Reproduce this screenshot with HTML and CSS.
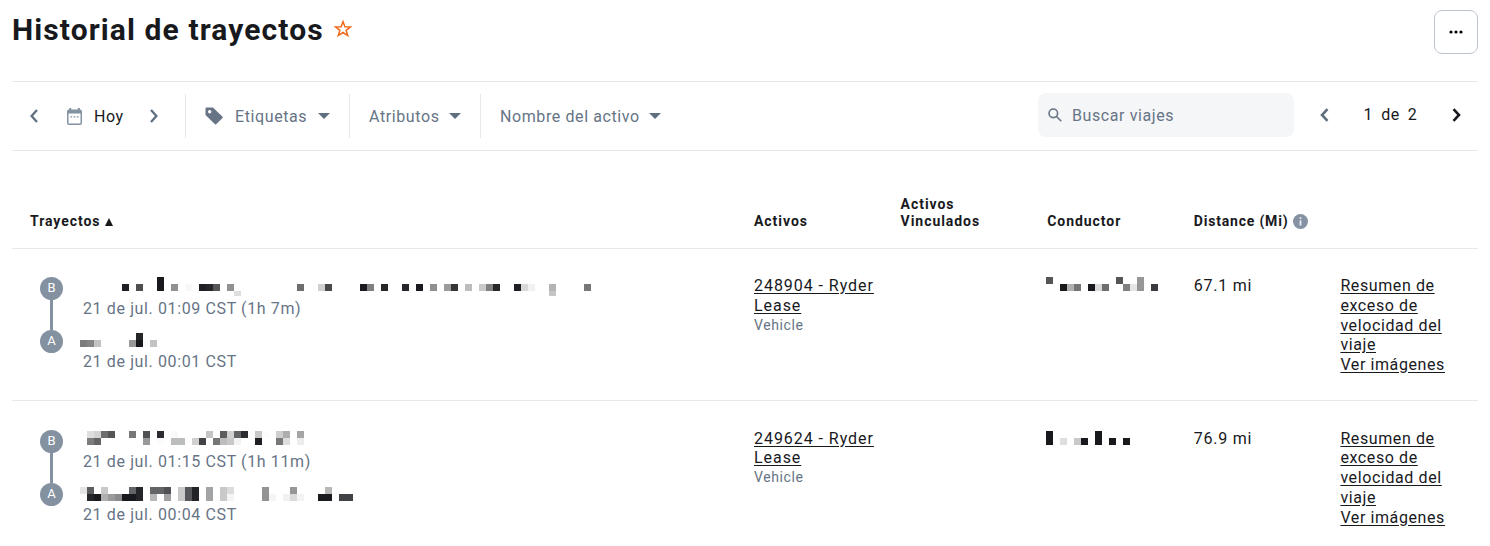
FILE: index.html
```html
<!DOCTYPE html>
<html lang="es">
<head>
    <meta charset="UTF-8">
    <meta name="viewport" content="width=device-width, initial-scale=1.0">
    <title>Historial de trayectos</title>
    <link rel="stylesheet" href="styles.css">
</head>
<body>
    <div class="page">
        <header class="header">
            <h1>Historial de trayectos</h1>
            <svg class="star" width="20" height="20" viewBox="0 0 20 20"><path d="M10 2.6l1.9 5.1 5.6.2-4.4 3.4 1.6 5.3-4.7-3.1-4.7 3.1 1.6-5.3-4.4-3.4 5.6-.2z"/></svg>
            <button class="more-button" type="button" aria-label="Más">
                <svg width="14" height="4" viewBox="0 0 14 4"><circle cx="2" cy="2" r="1.6"/><circle cx="7" cy="2" r="1.6"/><circle cx="12" cy="2" r="1.6"/></svg>
            </button>
        </header>

        <div class="toolbar">
            <div class="date-picker">
                <svg class="chevron" width="8" height="14" viewBox="0 0 8 14"><path d="M7 1L1.6 7 7 13"/></svg>
                <svg class="calendar" width="15" height="17" viewBox="0 0 15 17">
                    <path class="fill" d="M2.2 0h2v1.6h6.6V0h2v1.6H13a2 2 0 0 1 2 2V15a2 2 0 0 1-2 2H2a2 2 0 0 1-2-2V3.6a2 2 0 0 1 2-2h.2zM1.5 5.6v9.9h12V5.6z"/>
                    <path class="fill" d="M3.4 8.2h1.8v1.4H3.4zM6.6 8.2h1.8v1.4H6.6zM9.8 8.2h1.8v1.4H9.8z"/>
                </svg>
                <span class="today">Hoy</span>
                <svg class="chevron" width="8" height="14" viewBox="0 0 8 14"><path d="M1 1l5.4 6L1 13"/></svg>
            </div>
            <div class="filter">
                <svg class="tag" width="18" height="18" viewBox="0 0 18 18"><path fill-rule="evenodd" d="M1.5.5H8l9.5 9.3a.8.8 0 0 1 0 1.1l-6.4 6.4a.8.8 0 0 1-1.1 0L.5 8V1.5a1 1 0 0 1 1-1zM4.7 3a1.7 1.7 0 1 0 0 3.4 1.7 1.7 0 0 0 0-3.4z"/></svg>
                <span class="etiquetas">Etiquetas</span>
                <span class="caret"></span>
            </div>
            <div class="filter">
                <span class="atributos">Atributos</span>
                <span class="caret"></span>
            </div>
            <div class="filter">
                <span class="nombre">Nombre del activo</span>
                <span class="caret"></span>
            </div>
            <div class="search">
                <svg width="14" height="14" viewBox="0 0 14 14"><circle cx="5.3" cy="5.3" r="4.3"/><path d="M8.5 8.5l4.8 4.8"/></svg>
                <span>Buscar viajes</span>
            </div>
            <div class="pager">
                <svg class="chevron prev" width="9" height="14" viewBox="0 0 9 14"><path d="M7.5 1.2L2 7l5.5 5.8"/></svg>
                <span class="pages"><span>1</span><span>de</span><span>2</span></span>
                <svg class="chevron next" width="9" height="14" viewBox="0 0 9 14"><path d="M1.5 1.2L7 7l-5.5 5.8"/></svg>
            </div>
        </div>

        <div class="row table-head">
            <div>Trayectos <span class="sort"></span></div>
            <div>Activos</div>
            <div>Activos<br>Vinculados</div>
            <div>Conductor</div>
            <div class="distance">Distance (Mi)
                <svg width="15" height="15" viewBox="0 0 15 15"><circle cx="7.5" cy="7.5" r="7.5" fill="#8592a3"/><path d="M6.6 3.3h1.8v1.8H6.6zM6.6 6.3h1.8v5.2H6.6z" fill="#e9edf1"/></svg>
            </div>
            <div></div>
        </div>

        <div class="row">
            <div class="trip">
                <div class="route"><span class="stop">B</span><span class="line"></span><span class="stop">A</span></div>
                <div class="places">
                    <svg class="mosaic" width="511" height="21" viewBox="0 0 73 3">
                        <rect x="6" y="1" width="1" height="1" fill="#1f2024"/>
                        <rect x="8" y="1" width="1" height="1" fill="#4d4e50"/>
                        <rect x="11" y="0" width="1" height="2" fill="#18191d"/>
                        <rect x="13" y="1" width="1" height="1" fill="#919191"/>
                        <rect x="15" y="1" width="1" height="1" fill="#f8f8f8"/>
                        <rect x="17" y="1" width="1" height="1" fill="#1f2023"/>
                        <rect x="18" y="1" width="1" height="1" fill="#26272a"/>
                        <rect x="19" y="1" width="1" height="1" fill="#555555"/>
                        <rect x="21" y="1" width="1" height="1" fill="#919191"/>
                        <rect x="22" y="2" width="1" height=".714" fill="#dedede"/>
                        <rect x="31" y="1" width="1" height="1" fill="#6e6e6e"/>
                        <rect x="34" y="1" width="1" height="1" fill="#cfd0d0"/>
                        <rect x="35" y="1" width="1" height="1" fill="#48494b"/>
                        <rect x="40" y="1" width="1" height="1" fill="#1a1b20"/>
                        <rect x="41" y="1" width="1" height="1" fill="#808080"/>
                        <rect x="43" y="1" width="1" height="1" fill="#26272b"/>
                        <rect x="46" y="1" width="1" height="1" fill="#26272b"/>
                        <rect x="48" y="1" width="1" height="1" fill="#1a1b20"/>
                        <rect x="50" y="1" width="1" height="1" fill="#8f8f8f"/>
                        <rect x="52" y="1" width="1" height="1" fill="#9a9b9d"/>
                        <rect x="53" y="1" width="1" height="1" fill="#353638"/>
                        <rect x="55" y="1" width="1" height="1" fill="#bdbdbd"/>
                        <rect x="57" y="1" width="1" height="1" fill="#cacaca"/>
                        <rect x="58" y="1" width="1" height="1" fill="#828282"/>
                        <rect x="59" y="1" width="1" height="1" fill="#26272b"/>
                        <rect x="62" y="1" width="1" height="1" fill="#1f2024"/>
                        <rect x="63" y="1" width="1" height="1" fill="#d9d9d9"/>
                        <rect x="64" y="1" width="1" height="1" fill="#f1f1f1"/>
                        <rect x="67" y="1" width="1" height="1" fill="#b4b4b4"/>
                        <rect x="67" y="2" width="1" height=".714" fill="#c5c5c5"/>
                        <rect x="72" y="1" width="1" height="1" fill="#777777"/>
                    </svg>
                    <p class="time">21 de jul. 01:09 CST (1h 7m)</p>
                    <svg class="mosaic second" width="77" height="21" viewBox="0 0 11 3">
                        <rect x="0" y="1" width="1" height="1" fill="#7c7c7c"/>
                        <rect x="1" y="1" width="1" height="1" fill="#858585"/>
                        <rect x="2" y="1" width="1" height="1" fill="#c3c3c3"/>
                        <rect x="7" y="1" width="1" height="1" fill="#999999"/>
                        <rect x="8" y="0" width="1" height="1" fill="#252628"/>
                        <rect x="8" y="1" width="1" height="1" fill="#18191d"/>
                        <rect x="9" y="1" width="1" height="1" fill="#fcfcfc"/>
                        <rect x="10" y="1" width="1" height="1" fill="#c3c3c3"/>
                    </svg>
                    <p class="time">21 de jul. 00:01 CST</p>
                </div>
            </div>
            <div class="asset"><a>248904 - Ryder Lease</a><small>Vehicle</small></div>
            <div></div>
            <div class="driver">
                <svg class="mosaic" width="112" height="14" viewBox="0 0 16 2">
                    <rect x="0" y="0" width="1" height="1" fill="#555555"/>
                    <rect x="2" y="1" width="1" height="1" fill="#18191d"/>
                    <rect x="3" y="1" width="1" height="1" fill="#b0b0b0"/>
                    <rect x="4" y="1" width="1" height="1" fill="#757575"/>
                    <rect x="6" y="1" width="1" height="1" fill="#18191d"/>
                    <rect x="7" y="1" width="1" height="1" fill="#dadada"/>
                    <rect x="8" y="1" width="1" height="1" fill="#6e6e6e"/>
                    <rect x="10" y="0" width="1" height="1" fill="#555555"/>
                    <rect x="11" y="1" width="1" height="1" fill="#808080"/>
                    <rect x="12" y="1" width="1" height="1" fill="#e5e5e5"/>
                    <rect x="13" y="0" width="1" height="2" fill="#969696"/>
                    <rect x="15" y="1" width="1" height="1" fill="#3a3b40"/>
                </svg>
            </div>
            <div class="miles">67.1 mi</div>
            <div class="links"><a>Resumen de<br>exceso de<br>velocidad del<br>viaje</a><br><a>Ver imágenes</a></div>
        </div>

        <div class="row last">
            <div class="trip">
                <div class="route"><span class="stop">B</span><span class="line"></span><span class="stop">A</span></div>
                <div class="places">
                    <svg class="mosaic" width="224" height="21" viewBox="0 0 32 3">
                        <rect x="1" y="0" width="1" height="1" fill="#dedede"/>
                        <rect x="2" y="0" width="1" height="1" fill="#d2d2d2"/>
                        <rect x="3" y="0" width="1" height="1" fill="#6c6d6f"/>
                        <rect x="4" y="0" width="1" height="1" fill="#555555"/>
                        <rect x="7" y="0" width="1" height="1" fill="#777777"/>
                        <rect x="9" y="0" width="1" height="1" fill="#505154"/>
                        <rect x="11" y="0" width="1" height="1" fill="#2b2c30"/>
                        <rect x="13" y="0" width="1" height="1" fill="#f9f9f9"/>
                        <rect x="18" y="0" width="1" height="1" fill="#c5c5c5"/>
                        <rect x="20" y="0" width="1" height="1" fill="#5c5d5f"/>
                        <rect x="21" y="0" width="1" height="1" fill="#d0d0d0"/>
                        <rect x="22" y="0" width="1" height="1" fill="#626365"/>
                        <rect x="23" y="0" width="1" height="1" fill="#2b2c2f"/>
                        <rect x="25" y="0" width="1" height="1" fill="#c8c8c8"/>
                        <rect x="26" y="0" width="1" height="1" fill="#fcfcfc"/>
                        <rect x="28" y="0" width="1" height="1" fill="#cecece"/>
                        <rect x="29" y="0" width="1" height="1" fill="#aeaeae"/>
                        <rect x="31" y="0" width="1" height="1" fill="#a5a5a5"/>
                        <rect x="1" y="1" width="1" height="1" fill="#7c7c7c"/>
                        <rect x="2" y="1" width="1" height="1" fill="#646567"/>
                        <rect x="9" y="1" width="1" height="1" fill="#999999"/>
                        <rect x="11" y="1" width="1" height="1" fill="#fcfcfc"/>
                        <rect x="13" y="1" width="2" height="1" fill="#bcbdbd"/>
                        <rect x="16" y="1" width="1" height="1" fill="#d0d0d0"/>
                        <rect x="17" y="1" width="1" height="1" fill="#424346"/>
                        <rect x="19" y="1" width="1" height="1" fill="#757677"/>
                        <rect x="20" y="1" width="1" height="1" fill="#bdbdbd"/>
                        <rect x="21" y="1" width="1" height="1" fill="#c9c9c9"/>
                        <rect x="22" y="1" width="1" height="1" fill="#f3f3f3"/>
                        <rect x="25" y="1" width="1" height="1" fill="#1f2023"/>
                        <rect x="28" y="1" width="1" height="1" fill="#777777"/>
                        <rect x="29" y="1" width="1" height="1" fill="#dedede"/>
                        <rect x="31" y="1" width="1" height="1" fill="#ececec"/>
                    </svg>
                    <p class="time">21 de jul. 01:15 CST (1h 11m)</p>
                    <svg class="mosaic second" width="273" height="21" viewBox="0 0 39 3">
                        <rect x="0" y="0" width="1" height="1" fill="#e5e5e5"/>
                        <rect x="1" y="0" width="1" height="1" fill="#5c5d60"/>
                        <rect x="3" y="0" width="1" height="1" fill="#c8c8c8"/>
                        <rect x="7" y="0" width="1" height="1" fill="#636467"/>
                        <rect x="8" y="0" width="1" height="2" fill="#252629"/>
                        <rect x="10" y="0" width="2" height="1" fill="#646567"/>
                        <rect x="12" y="0" width="1" height="1" fill="#505154"/>
                        <rect x="14" y="0" width="1" height="2" fill="#c9c9c9"/>
                        <rect x="15" y="0" width="1" height="2" fill="#56575a"/>
                        <rect x="16" y="0" width="1" height="2" fill="#222327"/>
                        <rect x="18" y="0" width="1" height="2" fill="#a2a4a5"/>
                        <rect x="20" y="0" width="1" height="2" fill="#c9c9c9"/>
                        <rect x="21" y="0" width="1" height="1" fill="#dcdcdc"/>
                        <rect x="26" y="0" width="1" height="2" fill="#939393"/>
                        <rect x="30" y="0" width="1" height="1" fill="#969696"/>
                        <rect x="35" y="0" width="1" height="1" fill="#b8b8b8"/>
                        <rect x="1" y="1" width="1" height="1" fill="#25262a"/>
                        <rect x="2" y="1" width="1" height="1" fill="#1a1b1f"/>
                        <rect x="3" y="1" width="1" height="1" fill="#b0b0b0"/>
                        <rect x="4" y="1" width="1" height="1" fill="#999a9c"/>
                        <rect x="5" y="1" width="1" height="1" fill="#8b8b8d"/>
                        <rect x="6" y="1" width="2" height="1" fill="#18191e"/>
                        <rect x="10" y="1" width="1" height="1" fill="#b8b8b8"/>
                        <rect x="12" y="1" width="1" height="1" fill="#a1a1a1"/>
                        <rect x="21" y="1" width="1" height="1" fill="#f5f5f5"/>
                        <rect x="27" y="1" width="1" height="1" fill="#f5f5f5"/>
                        <rect x="29" y="1" width="1" height="1" fill="#f1f1f1"/>
                        <rect x="30" y="1" width="1" height="1" fill="#dadada"/>
                        <rect x="31" y="1" width="1" height="1" fill="#f3f3f3"/>
                        <rect x="34" y="1" width="2" height="1" fill="#1a1b1f"/>
                        <rect x="37" y="1" width="2" height="1" fill="#414245"/>
                    </svg>
                    <p class="time">21 de jul. 00:04 CST</p>
                </div>
            </div>
            <div class="asset"><a>249624 - Ryder Lease</a><small>Vehicle</small></div>
            <div></div>
            <div class="driver">
                <svg class="mosaic" width="84" height="14" viewBox="0 0 12 2">
                    <rect x="0" y="0" width="1" height="2" fill="#18191d"/>
                    <rect x="2" y="1" width="1" height="1" fill="#dedede"/>
                    <rect x="4" y="1" width="1" height="1" fill="#c9c9c9"/>
                    <rect x="5" y="1" width="1" height="1" fill="#18191d"/>
                    <rect x="7" y="0" width="1" height="2" fill="#18191d"/>
                    <rect x="9" y="1" width="1" height="1" fill="#18191d"/>
                    <rect x="11" y="1" width="1" height="1" fill="#18191d"/>
                </svg>
            </div>
            <div class="miles">76.9 mi</div>
            <div class="links"><a>Resumen de<br>exceso de<br>velocidad del<br>viaje</a><br><a>Ver imágenes</a></div>
        </div>
    </div>
</body>
</html>
```
FILE: styles.css
```css
* {
    box-sizing: border-box;
}
body {
    margin: 0;
    background-color: #fff;
    color: #18191d;
    font-family: Roboto, "Liberation Sans", sans-serif;
    font-size: 16px;
    letter-spacing: 0.6px;
    overflow: hidden;
}
.page {
    height: 546px;
    padding: 0 12px;
    overflow: hidden;
}
.header {
    display: flex;
    height: 82px;
    border-bottom: 1px solid #e6e8eb;
}
h1 {
    margin: 12px 0 0;
    font-size: 30px;
    line-height: 36px;
    font-weight: 700;
    letter-spacing: 1.1px;
    width: 311px;
    white-space: nowrap;
}
.star {
    margin: 19px 0 0 10px;
    fill: none;
    stroke: #f26a1b;
    stroke-width: 1.5;
}
.more-button {
    display: flex;
    align-items: center;
    justify-content: center;
    width: 44px;
    height: 44px;
    margin: 10px 0 0 auto;
    padding: 0;
    border: 1px solid #bcc5cf;
    border-radius: 8px;
    background-color: #fff;
}
.toolbar {
    display: flex;
    height: 69px;
    padding: 12px 0;
    border-bottom: 1px solid #e6e8eb;
    color: #667485;
    white-space: nowrap;
}
.chevron {
    fill: none;
    stroke: #5f6f80;
    stroke-width: 2.3;
}
.date-picker {
    display: flex;
    align-items: center;
    width: 173px;
    padding-left: 18px;
}
.calendar {
    margin: 0 12px 0 29px;
}
.fill {
    fill: #8391a1;
    fill-rule: evenodd;
}
.today {
    width: 31px;
    margin-right: 25px;
    color: #18191d;
}
.filter {
    display: flex;
    align-items: center;
    padding: 0 19px;
    border-left: 1px solid #e6e8eb;
}
.tag {
    margin-right: 12px;
    fill: #667485;
}
.etiquetas {
    width: 74px;
}
.atributos {
    width: 71px;
}
.nombre {
    width: 140px;
}
.caret {
    margin-left: 9px;
    border: 6px solid transparent;
    border-top-color: #5f6f80;
    border-bottom: 0;
}
.search {
    display: flex;
    align-items: center;
    width: 256px;
    height: 44px;
    margin: -1px 0 0 auto;
    padding-left: 10px;
    border-radius: 8px;
    background-color: #f5f6f8;
    gap: 10px;
}
.search svg {
    fill: none;
    stroke: #667485;
    stroke-width: 1.6;
}
.pager {
    display: flex;
    align-items: center;
    height: 41px;
    width: 184px;
    padding: 0 17px 0 26px;
    justify-content: space-between;
    color: #18191d;
}
.prev, .next {
    stroke-width: 2.6;
}
.next {
    stroke: #18191d;
}
.pages {
    display: flex;
    gap: 8px;
}
.row {
    display: grid;
    grid-template-columns: 50% repeat(5, 10%);
    height: 152px;
    border-bottom: 1px solid #e6e8eb;
    padding-top: 27px;
    line-height: 19.75px;
}
.row > div {
    padding-left: 9px;
}
.table-head {
    height: 98px;
    padding: 0 0 18px;
    align-items: end;
    font-size: 14px;
    line-height: 17px;
    font-weight: 700;
    letter-spacing: 0.95px;
}
.row.table-head > div:first-child {
    padding-left: 18px;
}
.sort {
    display: inline-block;
    border: 4.5px solid transparent;
    border-bottom: 8px solid #18191d;
    border-top: 0;
}
.table-head .distance {
    display: flex;
    align-items: center;
    gap: 5px;
    white-space: nowrap;
    letter-spacing: 0.8px;
}
.row .trip {
    display: flex;
    padding-left: 28px;
}
.route {
    display: flex;
    flex-direction: column;
    align-items: center;
    width: 23px;
    padding-top: 1px;
}
.stop {
    width: 23px;
    height: 23px;
    border-radius: 50%;
    background-color: #8491a1;
    color: #fff;
    font-size: 13px;
    line-height: 22px;
    text-align: center;
    letter-spacing: 0;
}
.line {
    width: 3px;
    height: 30px;
    background-color: #8491a1;
}
.places {
    padding: 1px 0 0 17px;
}
.mosaic {
    display: block;
    margin-bottom: 1px;
    shape-rendering: crispEdges;
}
.second {
    margin: 14.25px 0 -2px;
}
.time {
    margin: 0 0 0 3px;
    color: #667485;
    letter-spacing: 0.62px;
}
.asset a, .links a {
    text-decoration: underline;
    text-underline-offset: 2px;
}
.asset a {
    letter-spacing: 0.95px;
}
.asset small {
    display: block;
    color: #667485;
    font-size: 14px;
}
.miles {
    letter-spacing: 0.75px;
}
.row .driver {
    padding: 1px 0 0 8px;
}
.links {
    white-space: nowrap;
}
.last {
    padding-top: 28px;
}
.last .mosaic {
    margin: 1px 0 0;
}
.last .second {
    margin: 15.25px 0 -3px;
}
.last .asset, .last .links {
    margin-top: -0.4px;
}
```
